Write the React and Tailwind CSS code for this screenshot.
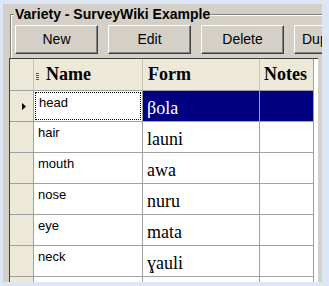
import React from "react";

const rows = [
  ["head", "βola"],
  ["hair", "launi"],
  ["mouth", "awa"],
  ["nose", "nuru"],
  ["eye", "mata"],
  ["neck", "ɣauli"],
  ["", ""],
];

function Btn({ children }) {
  return (
    <div className="w-[83px] h-[29px] shrink-0 flex items-center justify-center bg-[#d4d0c8] border border-t-white border-l-white border-r-[#404040] border-b-[#404040] shadow-[inset_-1px_-1px_0_#808080] text-[14px] text-black font-['Liberation_Sans',Arial,sans-serif]">
      {children}
    </div>
  );
}

export default function App() {
  return (
    <div className="w-[329px] h-[286px] bg-[#dce6f4] pt-[4px] pl-[3px] pr-[7px] pb-[4px] overflow-hidden">
      <div className="h-full bg-[#d4d0c8] flex flex-col overflow-hidden">
        {/* group box top area */}
        <div className="relative ml-[7px] mt-[10px] h-[44px] border-t border-l border-t-[#808080] border-l-[#808080] shadow-[inset_1px_1px_0_#ffffff]">
          <div className="absolute -top-[10px] left-[3px] px-[1px] bg-[#d4d0c8] text-[14px] leading-[18px] font-bold text-black font-['Liberation_Sans',Arial,sans-serif] whitespace-nowrap">
            Variety - SurveyWiki Example
          </div>
          <div className="flex gap-[10px] pl-[4px] pt-[10px]">
            <Btn>New</Btn>
            <Btn>Edit</Btn>
            <Btn>Delete</Btn>
            <div className="w-[83px] h-[29px] shrink-0 flex items-center pl-[7px] bg-[#d4d0c8] border border-t-white border-l-white border-r-[#404040] border-b-[#404040] shadow-[inset_-1px_-1px_0_#808080] text-[14px] text-black font-['Liberation_Sans',Arial,sans-serif] whitespace-nowrap">
              Duplicate
            </div>
          </div>
        </div>
        {/* grid */}
        <div className="ml-[6px] w-[309px] flex-1 bg-white border-t border-l border-[#404040] overflow-hidden">
          <div className="flex h-[32px] bg-[#ece9d8] border-b border-[#a0a0a0] w-[304px]">
            <div className="w-[24px] shrink-0 border-r border-[#c9c6b6]"></div>
            <div className="w-[109px] shrink-0 border-r border-[#c9c6b6] flex items-center pl-[2px]">
              <div className="flex flex-col gap-[1px] mr-[7px] mt-[4px]">
                <div className="w-[3px] h-[1px] bg-[#555]"></div>
                <div className="w-[3px] h-[1px] bg-[#555]"></div>
                <div className="w-[3px] h-[1px] bg-[#555]"></div>
                <div className="w-[3px] h-[1px] bg-[#555]"></div>
              </div>
              <span className="text-[18px] font-bold font-['Liberation_Serif','Times_New_Roman',serif] text-black">Name</span>
            </div>
            <div className="w-[117px] shrink-0 border-r border-[#c9c6b6] flex items-center pl-[5px]">
              <span className="text-[18px] font-bold font-['Liberation_Serif','Times_New_Roman',serif] text-black">Form</span>
            </div>
            <div className="w-[54px] shrink-0 border-r border-[#a0a0a0] flex items-center pl-[4px]">
              <span className="text-[18px] font-bold font-['Liberation_Serif','Times_New_Roman',serif] text-black">Notes</span>
            </div>
          </div>
          {rows.map(([name, form], i) => {
            const sel = i === 0;
            return (
              <div key={i} className="flex h-[31px] w-[304px] border-b border-[#a0a0a0]">
                <div className="w-[24px] shrink-0 bg-[#ece9d8] border-r border-[#a0a0a0] flex items-center pl-[12px]">
                  {sel && (
                    <svg width="4" height="7" viewBox="0 0 4 7">
                      <path d="M0 0 L4 3.5 L0 7 Z" fill="#000" />
                    </svg>
                  )}
                </div>
                <div className="w-[109px] shrink-0 border-r border-[#a0a0a0] bg-white p-[1px]">
                  <div className={`h-full pl-[3px] pt-[2px] text-[13px] leading-[16px] text-black font-['Liberation_Sans',Arial,sans-serif] ${sel ? "border border-dotted border-black pl-[2px] pt-[1px]" : ""}`}>
                    {name}
                  </div>
                </div>
                <div className={`w-[117px] shrink-0 border-r border-[#a0a0a0] flex items-center pl-[4px] pt-[4px] text-[18px] font-['Liberation_Serif','Times_New_Roman',serif] ${sel ? "bg-[#000080] text-white" : "bg-white text-black"}`}>
                  {form}
                </div>
                <div className={`w-[54px] shrink-0 border-r border-[#a0a0a0] ${sel ? "bg-[#000080]" : "bg-white"}`}></div>
              </div>
            );
          })}
        </div>
      </div>
    </div>
  );
}
